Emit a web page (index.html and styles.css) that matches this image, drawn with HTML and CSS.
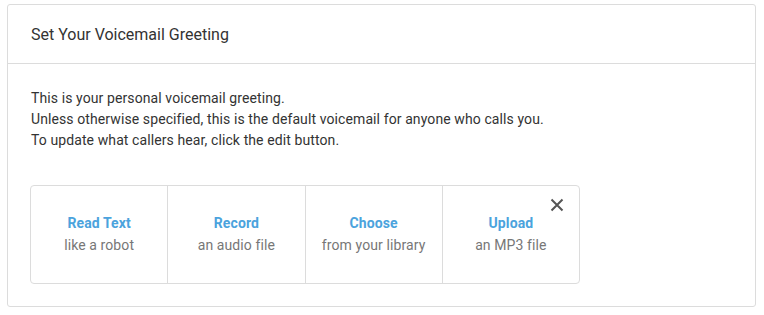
FILE: index.html
```html
<!DOCTYPE html>
<html lang="en">

<head>
    <meta charset="UTF-8">
    <meta name="viewport" content="width=device-width, initial-scale=1.0">
    <title>Voicemail Greeting</title>
    <link rel="stylesheet" href="styles.css">
</head>

<body>
    <div class="card">
        <div class="card-header">
            <h2>Set Your Voicemail Greeting</h2>
        </div>
        <div class="card-body">
            <p class="intro">
                This is your personal voicemail greeting.<br>
                Unless otherwise specified, this is the default voicemail for anyone who calls you.<br>
                To update what callers hear, click the edit button.
            </p>
            <div class="options">
                <button class="option">
                    <span class="opt-title">Read Text</span>
                    <span class="opt-sub">like a robot</span>
                </button>
                <button class="option">
                    <span class="opt-title">Record</span>
                    <span class="opt-sub">an audio file</span>
                </button>
                <button class="option">
                    <span class="opt-title">Choose</span>
                    <span class="opt-sub">from your library</span>
                </button>
                <button class="option">
                    <span class="opt-title">Upload</span>
                    <span class="opt-sub">an MP3 file</span>
                </button>
                <button class="close-btn" aria-label="Close">
                    <svg width="14" height="14" viewBox="0 0 14 14">
                        <path d="M1.5 1.5 L12.5 12.5 M12.5 1.5 L1.5 12.5" stroke="#555" stroke-width="2" fill="none"/>
                    </svg>
                </button>
            </div>
        </div>
    </div>
</body>

</html>
```

FILE: styles.css
```css
*{
    margin: 0;
    padding: 0;
    box-sizing: border-box;
}
body{
    background-color: #fff;
    font-family: Roboto, "Liberation Sans", sans-serif;
    padding: 4px 8px 0 7px;
}
.card{
    border: 1px solid #dcdcdc;
    border-radius: 3px;
    height: 303px;
}
.card-header{
    height: 59px;
    border-bottom: 1px solid #dcdcdc;
    padding: 0 23px;
    display: flex;
    align-items: center;
}
.card-header h2{
    font-size: 16px;
    font-weight: 400;
    color: #333;
}
.card-body{
    padding: 24px 23px;
}
.intro{
    font-size: 14px;
    line-height: 21px;
    letter-spacing: 0.1px;
    color: #333;
}
.options{
    position: relative;
    margin: 34px 0 0 -1px;
    width: 550px;
    height: 99px;
    border: 1px solid #dcdcdc;
    border-radius: 4px;
    display: flex;
}
.option{
    flex: 1;
    background: none;
    border: none;
    border-right: 1px solid #dcdcdc;
    font-family: inherit;
    display: flex;
    flex-direction: column;
    justify-content: center;
    align-items: center;
    gap: 1px;
    cursor: pointer;
}
.option:nth-child(4){
    border-right: none;
}
.opt-title{
    font-size: 14px;
    font-weight: 700;
    color: #4ba3dd;
    line-height: 21px;
    letter-spacing: 0.1px;
}
.opt-sub{
    font-size: 14px;
    color: #777;
    line-height: 21px;
    letter-spacing: 0.1px;
}
.close-btn{
    position: absolute;
    top: 12px;
    right: 15px;
    background: none;
    border: none;
    cursor: pointer;
    display: flex;
}
```
